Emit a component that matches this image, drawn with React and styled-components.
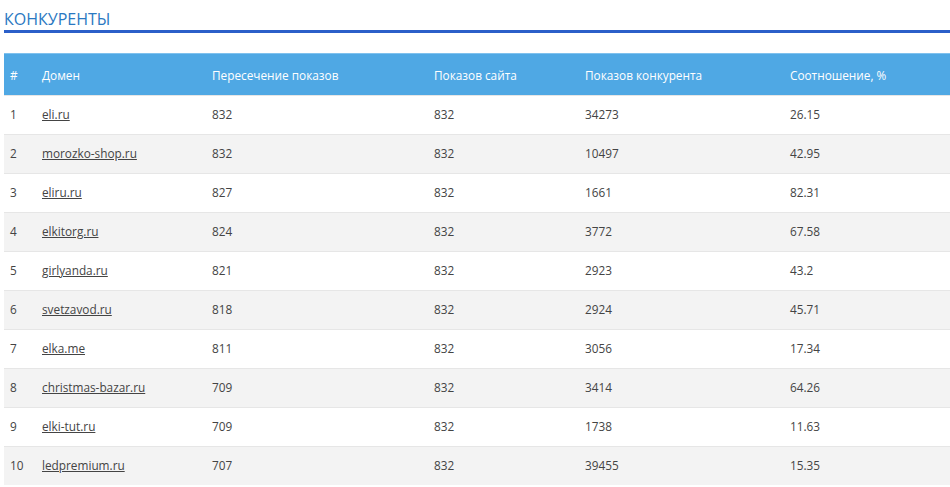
import React from 'react';
import styled, { createGlobalStyle } from 'styled-components';

const Global = createGlobalStyle`
  body { margin: 0; font-family: "Open Sans", sans-serif; background: #fff; }
`;

const Page = styled.div`
  padding: 0 0 0 4px;
  width: 946px;
`;

const Title = styled.h2`
  margin: 0;
  padding-top: 9px;
  font-size: 16px;
  font-weight: 400;
  color: #2a78c2;
  line-height: 20px;
  border-bottom: 3px solid #2b5fc9;
  padding-bottom: 1px;
`;

const Table = styled.div`
  margin-top: 20px;
  font-size: 11.8px;
  color: #444;
`;

const cols = '32px 170px 222px 151px 205px 1fr';

const Head = styled.div`
  display: grid;
  grid-template-columns: ${cols};
  height: 42px;
  align-items: center;
  background: #4fa8e4;
  border-top: 1px solid #7fc1ee;
  box-sizing: border-box;
  color: #fff;
`;

const Row = styled.div`
  display: grid;
  grid-template-columns: ${cols};
  height: 39px;
  padding-bottom: 2px;
  align-items: center;
  background: ${(p) => (p.odd ? '#f3f3f3' : '#fff')};
  border-top: 1px solid #e6e6e6;
  box-sizing: border-box;
`;

const Cell = styled.div`
  padding-left: 6px;
`;

const Link = styled.a`
  color: #444;
  text-decoration: underline;
`;

const data = [
  ['eli.ru', 832, 832, 34273, '26.15'],
  ['morozko-shop.ru', 832, 832, 10497, '42.95'],
  ['eliru.ru', 827, 832, 1661, '82.31'],
  ['elkitorg.ru', 824, 832, 3772, '67.58'],
  ['girlyanda.ru', 821, 832, 2923, '43.2'],
  ['svetzavod.ru', 818, 832, 2924, '45.71'],
  ['elka.me', 811, 832, 3056, '17.34'],
  ['christmas-bazar.ru', 709, 832, 3414, '64.26'],
  ['elki-tut.ru', 709, 832, 1738, '11.63'],
  ['ledpremium.ru', 707, 832, 39455, '15.35'],
];

export default function App() {
  return (
    <Page>
      <Global />
      <Title>КОНКУРЕНТЫ</Title>
      <Table>
        <Head>
          <Cell>#</Cell>
          <Cell>Домен</Cell>
          <Cell>Пересечение показов</Cell>
          <Cell>Показов сайта</Cell>
          <Cell>Показов конкурента</Cell>
          <Cell>Соотношение, %</Cell>
        </Head>
        {data.map((r, i) => (
          <Row key={r[0]} odd={i % 2 === 1}>
            <Cell>{i + 1}</Cell>
            <Cell><Link href="#">{r[0]}</Link></Cell>
            <Cell>{r[1]}</Cell>
            <Cell>{r[2]}</Cell>
            <Cell>{r[3]}</Cell>
            <Cell>{r[4]}</Cell>
          </Row>
        ))}
      </Table>
    </Page>
  );
}
